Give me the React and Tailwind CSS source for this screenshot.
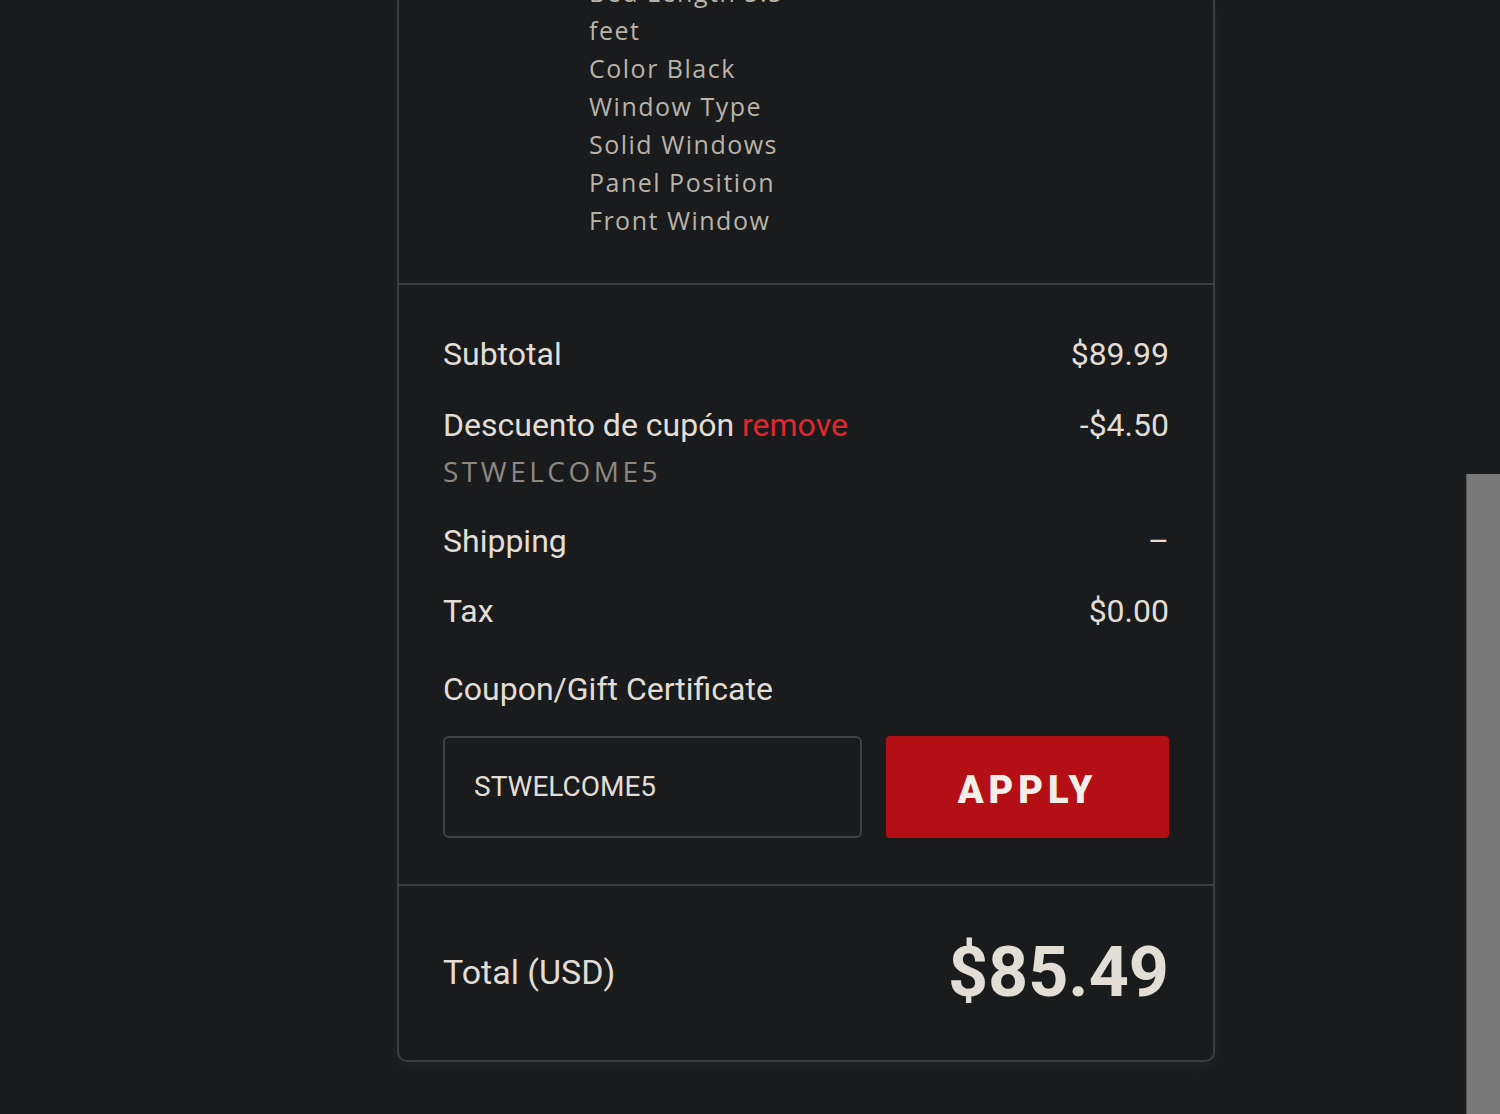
import React from "react";

const specs = [
  "Bed Length 5.5",
  "feet",
  "Color Black",
  "Window Type",
  "Solid Windows",
  "Panel Position",
  "Front Window",
];

const Row = ({ label, value, className = "" }) => (
  <div className={`flex items-center justify-between leading-[40px] ${className}`}>
    <span>{label}</span>
    <span>{value}</span>
  </div>
);

export default function App() {
  return (
    <div className="relative min-h-[1114px] w-full overflow-hidden bg-[#1b1c1e] font-['Roboto',sans-serif] text-[#e2ddd5]">
      {/* order summary card */}
      <div className="ml-[397px] w-[818px] -mt-[2px] rounded-b-[10px] border-2 border-[#3b3e41] bg-[#1a1b1d] shadow-[0_6px_14px_rgba(255,255,255,0.03)]">
        {/* line item options */}
        <div className="-mt-[27px] pb-[44px] pl-[190px] font-['Open_Sans',sans-serif] text-[25px] leading-[38px] tracking-[1.5px] text-[#b9b3aa]">
          {specs.map((s) => (
            <div key={s}>{s}</div>
          ))}
        </div>

        {/* totals */}
        <div className="border-t-2 border-[#3b3e41] px-[44px] pt-[49px] pb-[46px] text-[32px]">
          <Row label="Subtotal" value="$89.99" />
          <Row
            className="mt-[31px]"
            label={
              <>
                Descuento de cupón{" "}
                <span className="text-[#e2262c]">remove</span>
              </>
            }
            value="-$4.50"
          />
          <div className="mt-[8px] font-['Open_Sans',sans-serif] text-[28px] leading-[36px] tracking-[3.5px] text-[#8d8881]">
            STWELCOME5
          </div>
          <Row className="mt-[32px]" label="Shipping" value="–" />
          <Row className="mt-[30px]" label="Tax" value="$0.00" />
          <div className="mt-[38px] leading-[40px]">Coupon/Gift Certificate</div>
          <div className="mt-[27px] flex gap-[24px]">
            <div className="flex h-[102px] w-[419px] items-center rounded-[6px] border-2 border-[#3f4245] pl-[29px] text-[28px] text-[#e2ddd5]">
              STWELCOME5
            </div>
            <button className="flex h-[102px] flex-1 items-center justify-center rounded-[4px] bg-[#b30f14] pt-[6px] text-[38px] font-black tracking-[5px] text-[#f3efe8]">
              APPLY
            </button>
          </div>
        </div>

        {/* grand total */}
        <div className="flex items-center justify-between border-t-2 border-[#3b3e41] px-[44px] pt-[46px] pb-[48px]">
          <span className="text-[34px] leading-[40px]">Total (USD)</span>
          <span className="text-[70px] font-bold leading-[80px]">$85.49</span>
        </div>
      </div>

      {/* browser scrollbar thumb */}
      <div className="fixed right-0 top-[474px] h-[640px] w-[34px] border-l border-[#5a5b5c] bg-[#787879]" />
    </div>
  );
}
